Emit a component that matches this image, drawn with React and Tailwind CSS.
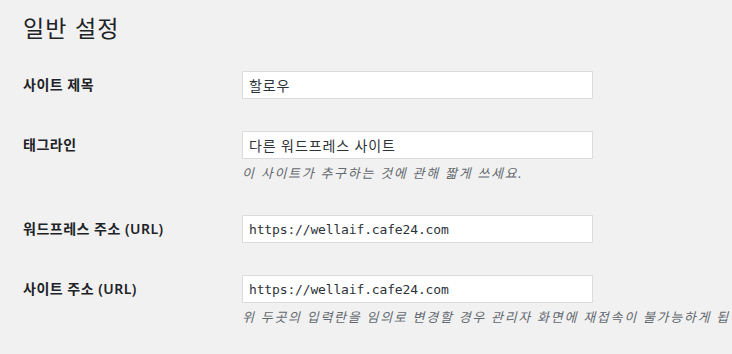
import React from "react";

const KR = { fontFamily: '"Noto Sans", "Noto Sans CJK KR", sans-serif' };

function Field({ value, mono }) {
  return (
    <input
      readOnly
      value={value}
      className={
        "block w-[351px] h-[28px] bg-white border border-[#dcdcde] pl-[6px] text-[#2c3338] outline-none " +
        (mono
          ? "text-[13px] tracking-[-0.15px] font-['DejaVu_Sans_Mono',monospace]"
          : "text-[14px] tracking-[0.9px]")
      }
      style={mono ? undefined : KR}
    />
  );
}

function Row({ label, value, mono, desc }) {
  return (
    <div className="flex items-start">
      <div className="w-[219px] shrink-0 pt-[20px] text-[14px] leading-[20px] tracking-[0.5px] font-semibold text-[#1d2327]">
        {label}
      </div>
      <div className="pt-[16px] pb-[16px]">
        <Field value={value} mono={mono} />
        {desc && (
          <p className="mt-[4px] text-[13px] leading-[20px] tracking-[1.7px] italic text-[#646970] whitespace-nowrap">
            {desc}
          </p>
        )}
      </div>
    </div>
  );
}

export default function App() {
  return (
    <div className="w-[732px] h-[354px] overflow-hidden bg-[#f1f1f1]" style={KR}>
      <div className="pl-[23px]">
        <h1 className="pt-[13px] text-[23px] leading-[30px] tracking-[1.2px] font-normal text-[#1d2327]">일반 설정</h1>
        <div className="mt-[12px]">
          <Row label="사이트 제목" value="할로우" />
          <Row
            label="태그라인"
            value="다른 워드프레스 사이트"
            desc="이 사이트가 추구하는 것에 관해 짧게 쓰세요."
          />
          <Row label="워드프레스 주소 (URL)" value="https://wellaif.cafe24.com" mono />
          <Row
            label="사이트 주소 (URL)"
            value="https://wellaif.cafe24.com"
            mono
            desc="위 두곳의 입력란을 임의로 변경할 경우 관리자 화면에 재접속이 불가능하게 됩니다."
          />
        </div>
      </div>
    </div>
  );
}
